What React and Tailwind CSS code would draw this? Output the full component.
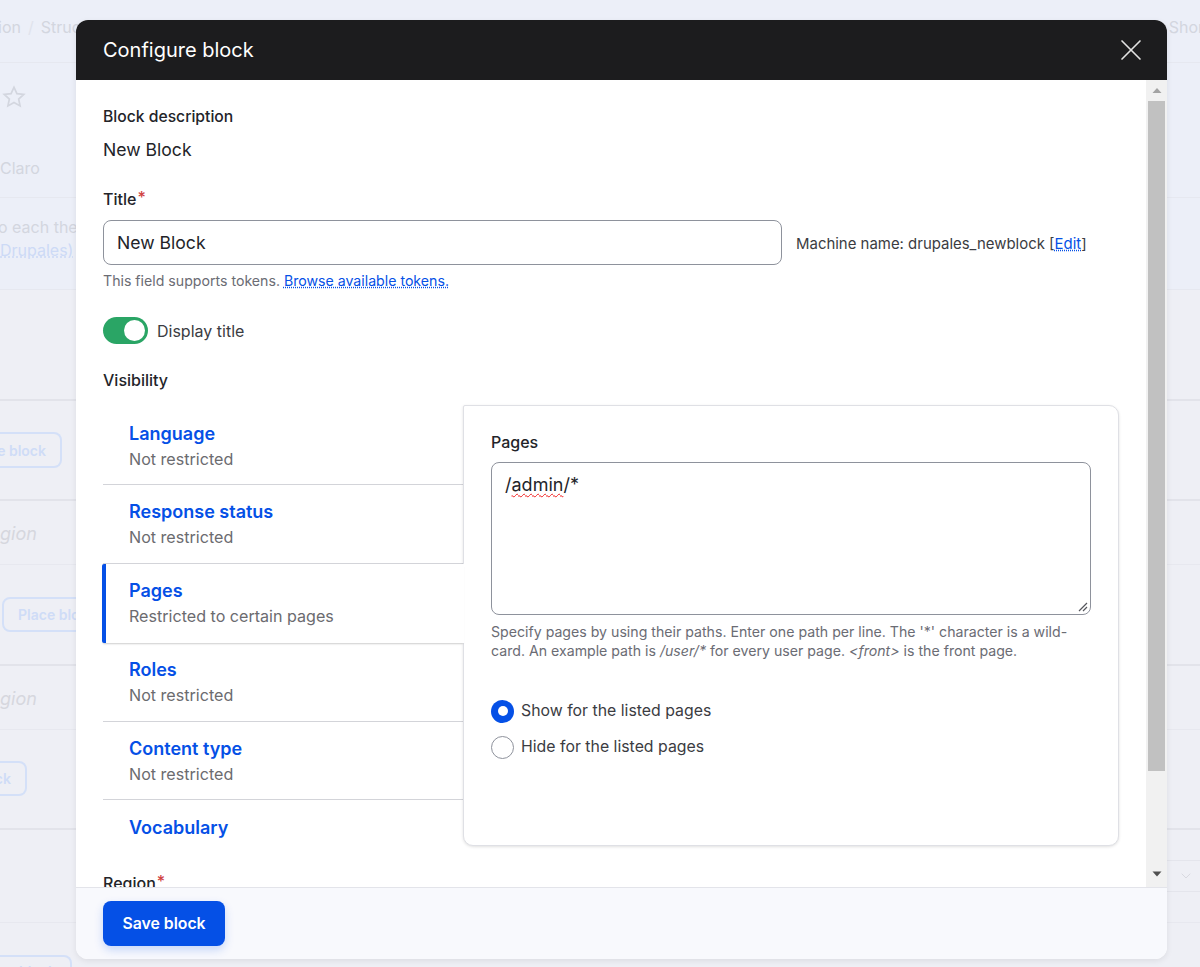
import { ChevronDown, X } from 'lucide-react'

const tabs = [
  { label: 'Language', summary: 'Not restricted', h: 'h-[80px] pt-[16px]' },
  { label: 'Response status', summary: 'Not restricted', h: 'h-[79px] pt-[14px]' },
  { label: 'Pages', summary: 'Restricted to certain pages', h: 'h-[79px] pt-[14px]', active: true },
  { label: 'Roles', summary: 'Not restricted', h: 'h-[79px] pt-[14px]' },
  { label: 'Content type', summary: 'Not restricted', h: 'h-[78px] pt-[14px]' },
  { label: 'Vocabulary', h: 'h-[46px] pt-[15px]', last: true },
]

const Required = () => <span className="relative -top-[2px] ml-[1px] align-top text-[#d0423f]">*</span>

const VerticalTab = ({ tab }) => {
  if (tab.active) {
    return (
      <div className={`relative z-10 -ml-px -mr-px flex ${tab.h} flex-col rounded-l-[2px] border-l-4 border-[#0550e6] bg-white pl-[23px] shadow-[0_2px_2px_-1px_rgba(0,0,0,0.2)]`}>
        <span className="text-[18px] leading-[26px] font-semibold text-[#0550e6]">{tab.label}</span>
        <span className="text-[16.1px] leading-[24px] text-[#6b6b6f]">{tab.summary}</span>
      </div>
    )
  }
  return (
    <div className={`flex ${tab.h} flex-col pl-[26px] ${tab.last ? '' : 'border-b border-[#d3d4d9]'}`}>
      <span className="text-[18px] leading-[26px] font-semibold text-[#0550e6]">{tab.label}</span>
      {tab.summary && <span className="text-[16.1px] leading-[24px] text-[#6b6b6f]">{tab.summary}</span>}
    </div>
  )
}

const Backdrop = () => (
  <div className="flex flex-col whitespace-nowrap text-[#d3d6df]">
    <div className="flex h-[63px] shrink-0 items-start justify-between border-b border-[#e6e8f0] pt-[17px] text-[16px] leading-[20px]">
      <div className="-ml-[2px] flex gap-[7px]"><span>ion</span><span className="text-[#e0e3ec]">/</span><span>Structure</span></div>
      <span className="-mr-[4px]">Shor</span>
    </div>
    <div className="flex h-[135px] shrink-0 flex-col border-b border-[#e6e8f0] pt-[21px]">
      <svg width="26" height="26" viewBox="0 0 24 24" fill="none" stroke="#d3d6df" strokeWidth="1.6" className="ml-[1px]">
        <path d="M12 3l2.7 5.9 6.3.7-4.7 4.3 1.3 6.3-5.6-3.2-5.6 3.2 1.3-6.3L3 9.6l6.3-.7z" />
      </svg>
      <span className="mt-[48px] text-[16px] leading-[20px]">Claro</span>
    </div>
    <div className="h-[92px] shrink-0 border-b border-[#e6e8f0] pt-[18px] text-[16px] leading-[23px]">
      <p className="-ml-[2px]">o each theme</p>
      <p className="text-[#cddaf6] underline decoration-dotted">Drupales)</p>
    </div>
    <div className="h-[111px] shrink-0 border-b-2 border-[#e2e3ea] bg-[#eeeff5]" />
    <div className="flex h-[100px] shrink-0 items-start border-b-2 border-[#e2e3ea] bg-[#eeeff5] pt-[31px]">
      <span className="flex h-[36px] w-[62px] items-center justify-end rounded-r-[8px] border-2 border-l-0 border-[#d4e0f8] pr-[14px] text-[14px] font-semibold text-[#cfdcf7]">e block</span>
    </div>
    <div className="h-[64px] shrink-0 border-b border-[#e7e8ef] bg-[#eeeff5] pt-[19px] text-[18px] italic text-[#d6d7de]">gion</div>
    <div className="flex h-[101px] shrink-0 items-start border-b-2 border-[#e2e3ea] bg-[#eeeff5] pl-[2px] pt-[32px]">
      <span className="flex h-[35px] w-[110px] items-center rounded-[8px] border-2 border-[#d4e0f8] pl-[14px] text-[14px] font-semibold text-[#cfdcf7]">Place block</span>
    </div>
    <div className="h-[64px] shrink-0 border-b border-[#e7e8ef] bg-[#eeeff5] pt-[19px] text-[18px] italic text-[#d6d7de]">gion</div>
    <div className="flex h-[100px] shrink-0 items-start border-b-2 border-[#e2e3ea] bg-[#eeeff5] pt-[31px]">
      <span className="flex h-[35px] w-[27px] items-center justify-end rounded-r-[8px] border-2 border-l-0 border-[#d4e0f8] pr-[14px] text-[14px] font-semibold text-[#cfdcf7]">ck</span>
    </div>
    <div className="flex h-[93px] shrink-0 flex-col items-end border-b border-[#e7e8ef] bg-[#eeeff5] pt-[30px]">
      <span className="flex h-[32px] w-[60px] items-center justify-end border-y border-[#e4e5ec] pr-[6px]">
        <ChevronDown className="h-[16px] w-[16px] text-[#d8d9e0]" strokeWidth={1.5} />
      </span>
    </div>
    <div className="h-[44px] shrink-0 bg-[#eeeff5] pt-[32px]">
      <span className="flex h-[36px] w-[72px] items-start justify-end rounded-r-[8px] border-2 border-l-0 border-[#d4e0f8] pr-[14px] pt-[5px] text-[14px] leading-[20px] font-semibold text-[#cfdcf7]">Place block</span>
    </div>
  </div>
)

const App = () => {
  return (
    <div className="relative h-[967px] w-[1200px] overflow-hidden bg-[#eceff8] font-['Inter',sans-serif]">
      <Backdrop />

      {/* Dialog */}
      <div className="absolute left-[76px] top-[20px] flex h-[939px] w-[1091px] flex-col overflow-hidden rounded-[12px] bg-white shadow-[0_2px_6px_rgba(0,0,0,0.08)]">
        <div className="flex h-[60px] shrink-0 items-center justify-between bg-[#1c1c1e] pl-[27px] pr-[18px]">
          <h2 className="text-[20px] font-normal text-white">Configure block</h2>
          <X className="h-[36px] w-[36px] text-[#e2e2e2]" strokeWidth={1.1} />
        </div>

        <div className="flex min-h-0 flex-1">
          <div className="min-w-0 flex-1 overflow-hidden pl-[27px] pt-[27px] text-[#232429]">
            <div className="text-[15.7px] leading-[20px] font-medium">Block description</div>
            <div className="mt-[11px] text-[17.6px] leading-[24px]">New Block</div>

            <div className="mt-[27px] text-[16px] leading-[20px] font-medium">Title<Required /></div>
            <div className="mt-[11px] flex items-center">
              <div className="flex h-[45px] w-[679px] shrink-0 items-center rounded-[8px] border border-[#8e929c] pl-[13px] pt-[2px] text-[17.6px] text-[#232429]">New Block</div>
              <div className="ml-[14px] pt-[3px] text-[14.95px] whitespace-nowrap text-[#3b3c42]">
                Machine name: drupales_newblock [<a className="text-[#0550e6] underline decoration-dotted">Edit</a>]
              </div>
            </div>
            <p className="mt-[6px] text-[14.15px] leading-[20px] text-[#6b6c74]">
              This field supports tokens. <a className="text-[#0550e6] underline decoration-dotted">Browse available tokens.</a>
            </p>

            <div className="mt-[26px] flex items-center gap-[9px]">
              <span className="flex h-[27px] w-[45px] items-center justify-end rounded-full bg-[#2aa565] pr-[3px]">
                <span className="h-[21px] w-[21px] rounded-full bg-white" />
              </span>
              <span className="text-[16px] text-[#3b3c42]">Display title</span>
            </div>

            <div className="mt-[26px] text-[16px] leading-[20px] font-medium">Visibility</div>

            <div className="mt-[15px] flex h-[441px] w-[1016px]">
              <div className="w-[360px] shrink-0">
                {tabs.map((tab) => <VerticalTab key={tab.label} tab={tab} />)}
              </div>
              <div className="flex-1 rounded-r-[10px] rounded-bl-[10px] rounded-tl-[2px] border border-[#dfe0e5] bg-white pl-[27px] pt-[26px] shadow-[0_1px_3px_rgba(0,0,0,0.12)]">
                <div className="text-[16px] leading-[20px] font-medium">Pages</div>
                <div className="relative mt-[10px] h-[153px] w-[600px] rounded-[8px] border border-[#8e929c] pl-[13px] pt-[9px] text-[18px] leading-[26px]">
                  /<span className="underline decoration-[#f02020] decoration-wavy decoration-1 underline-offset-2">admin</span>/*
                  <svg width="12" height="12" viewBox="0 0 12 12" className="absolute bottom-[1px] right-[1px]" stroke="#55565c" strokeWidth="1.2">
                    <path d="M2 10 L10 2 M6 10 L10 6" />
                  </svg>
                </div>
                <p className="mt-[7px] w-[600px] text-[14.15px] leading-[19px] text-[#6b6c74]">
                  Specify pages by using their paths. Enter one path per line. The '*' character is a wild-card. An example path is <em>/user/*</em> for every user page. <em>&lt;front&gt;</em> is the front page.
                </p>
                <div className="mt-[39px] flex items-center gap-[7px]">
                  <span className="flex h-[23px] w-[23px] items-center justify-center rounded-full bg-[#0550e6]">
                    <span className="h-[10px] w-[10px] rounded-full bg-white" />
                  </span>
                  <span className="text-[15.85px] leading-[24px] text-[#3b3c42]">Show for the listed pages</span>
                </div>
                <div className="mt-[12px] flex items-center gap-[7px]">
                  <span className="h-[23px] w-[23px] rounded-full border border-[#8e929c]" />
                  <span className="text-[15.85px] leading-[24px] text-[#3b3c42]">Hide for the listed pages</span>
                </div>
              </div>
            </div>

            <div className="mt-[27px] text-[16px] leading-[20px] font-medium">Region<Required /></div>
          </div>

          {/* Scrollbar */}
          <div className="flex w-[21px] shrink-0 flex-col items-center bg-[#f1f1f1] px-[2px]">
            <svg width="10" height="21" viewBox="0 0 10 21" className="shrink-0" fill="#a3a3a3"><path d="M5 8 L9.5 13 L0.5 13 Z" /></svg>
            <div className="h-[670px] w-full shrink-0 bg-[#c1c1c1]" />
            <div className="flex-1" />
            <svg width="10" height="21" viewBox="0 0 10 21" className="shrink-0" fill="#505050"><path d="M0.5 5.5 L9.5 5.5 L5 10.5 Z" /></svg>
          </div>
        </div>

        <div className="flex h-[72px] shrink-0 items-start border-t border-[#e3e4ea] bg-[#f8f9fd] pl-[27px] pt-[13px]">
          <button className="h-[45px] w-[122px] rounded-[8px] bg-[#0550e6] text-[15.8px] font-semibold text-white shadow-[0_4px_10px_rgba(5,80,230,0.2)]">Save block</button>
        </div>
      </div>
    </div>
  )
}

export default App
